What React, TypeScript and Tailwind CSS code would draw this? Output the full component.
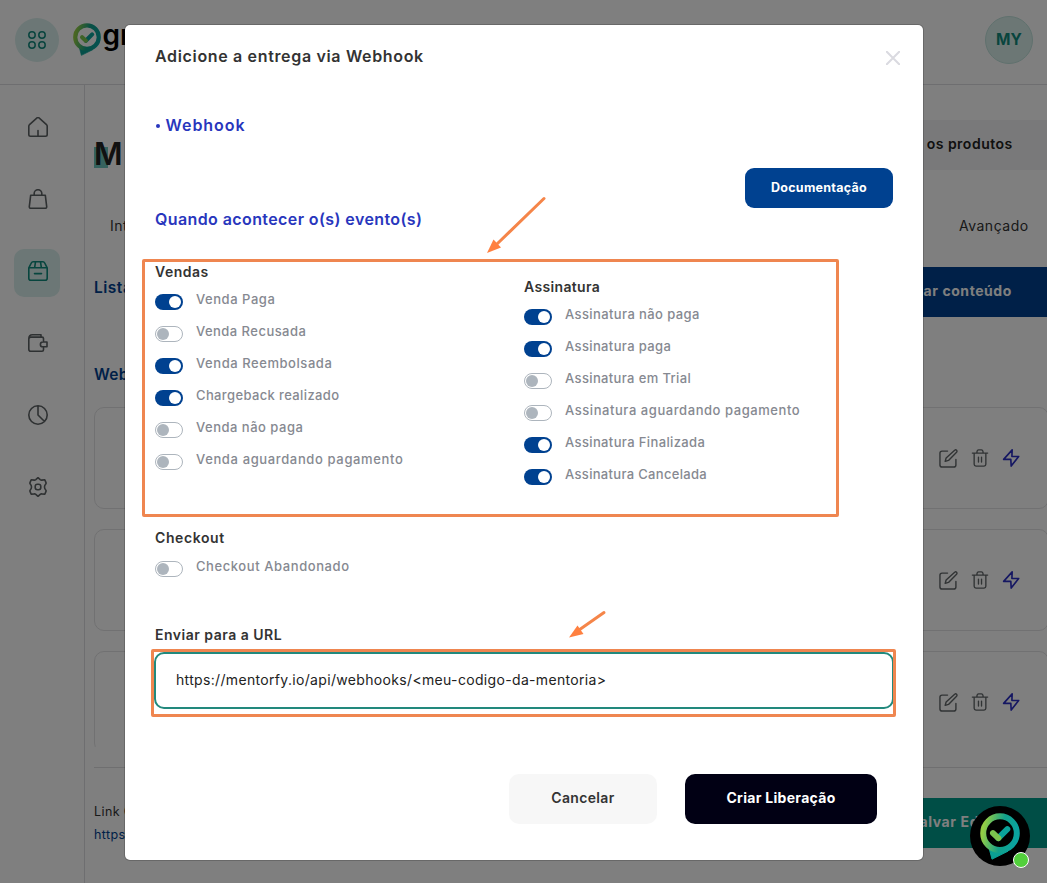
import type { ReactNode } from "react";

function LogoMark({ id, className }: { id: string; className: string }) {
  return (
    <svg viewBox="0 0 60 70" className={className} fill="none">
      <defs>
        <linearGradient id={id} x1="0" y1="0.4" x2="1" y2="0.6">
          <stop offset="0" stopColor="#93cd45" />
          <stop offset="0.55" stopColor="#12a08a" />
          <stop offset="1" stopColor="#0aa3a0" />
        </linearGradient>
      </defs>
      <path d="M13 50 L18 69 L42 57 Z" fill="#0b9f94" stroke="#0b9f94" strokeWidth="1.5" strokeLinejoin="round" />
      <circle cx="30" cy="30" r="25.2" stroke={`url(#${id})`} strokeWidth="9" />
      <path d="M27.500 37.500 41 24" stroke="#0aa39a" strokeWidth="9" strokeLinecap="round" />
      <path d="M19.500 30 27.500 37.500" stroke="#7cc64e" strokeWidth="9" strokeLinecap="round" />
    </svg>
  );
}

function Icon({ children, className }: { children: ReactNode; className: string }) {
  return (
    <svg viewBox="0 0 20 20" fill="none" stroke="currentColor" strokeLinecap="round" strokeLinejoin="round" className={className}>
      {children}
    </svg>
  );
}

const navIcons: { name: string; active?: boolean; art: ReactNode }[] = [
  { name: "home", art: <path d="M.8 9.300c0-.7.2-1.200.7-1.600L9 .9c.6-.5 1.400-.5 2 0l7.500 6.800c.5.4.7.9.7 1.600v8.200c0 1-.7 1.700-1.700 1.700H2.500c-1 0-1.700-.7-1.700-1.700zM10 19v-5.500" /> },
  { name: "bag", art: <path d="M2.700 6.200h14.600l1.400 11.400c.1 1-.4 1.700-1.400 1.700H2.700c-1 0-1.500-.7-1.400-1.700zM6.200 6.200V4.300a3.800 3.600 0 0 1 7.600 0v1.900" /> },
  { name: "box", active: true, art: <path d="M.8 6.800v10.400c0 1.200.8 2 2 2h14.400c1.200 0 2-.8 2-2V6.800M.8 6.800h18.400M.8 6.800 3.300 2C3.700 1.200 4.200.8 5 .8h10c.8 0 1.300.4 1.700 1.200l2.500 4.800M7.500.8 6.600 6.800M12.500.8l.9 6M6.500 12.600h7" /> },
  { name: "wallet", art: <path d="M15.500 8V5.600c0-.9-.6-1.500-1.500-1.500H3.200A2.200 2.200 0 0 0 .8 6.200v10c0 1.200.8 2 2 2H14c.9 0 1.500-.6 1.500-1.500v-2M.8 6C.8 3 2 1.800 4.500 1.800H13v2.300M19 9v4.800h-4.200a2.400 2.400 0 0 1 0-4.800z" /> },
  { name: "chart", art: <path d="M10 .8a9.200 9.200 0 1 0 0 18.400A9.200 9.200 0 0 0 10 .8V10l6.300 6.300" /> },
  {
    name: "settings",
    art: (
      <>
        <path d="M7.800 2.600 10 .6l2.200 2c.5.4 1 .6 1.600.5l3-.4 1.200 2.900c0 .2.300.9-.2 1.400-.6.700-1.300 1.200-1.300 3s.7 2.300 1.300 3c.5.500.2 1.200.2 1.400l-1.200 2.900-3-.4c-.6-.1-1.100.1-1.600.5l-2.200 2-2.200-2c-.5-.4-1-.6-1.600-.5l-3 .4L2 14.400c0-.2-.3-.9.2-1.400.6-.7 1.300-1.200 1.300-3S2.800 7.700 2.200 7C1.700 6.500 2 5.800 2 5.600l1.200-2.900 3 .4c.6.100 1.100-.1 1.600-.5z" />
        <rect x="7.200" y="7.200" width="5.600" height="5.600" rx="2.200" />
      </>
    ),
  },
];

function Toggle({ on }: { on: boolean }) {
  return on ? (
    <span className="flex h-4 w-7 items-center justify-end rounded-full bg-[#004190] pr-0.5">
      <span className="size-3 rounded-full bg-white" />
    </span>
  ) : (
    <span className="flex h-4 w-7 items-center rounded-full border border-[#adb5bd] bg-white pl-px">
      <span className="size-3 rounded-full bg-[#adb5bd]" />
    </span>
  );
}

type Opt = { label: string; on: boolean; track: string };

const vendas: Opt[] = [
  { label: "Venda Paga", on: true, track: "tracking-[0.54px]" },
  { label: "Venda Recusada", on: false, track: "tracking-[0.46px]" },
  { label: "Venda Reembolsada", on: true, track: "tracking-[0.56px]" },
  { label: "Chargeback realizado", on: true, track: "tracking-[0.37px]" },
  { label: "Venda não paga", on: false, track: "tracking-[0.5px]" },
  { label: "Venda aguardando pagamento", on: false, track: "tracking-[0.63px]" },
];

const assinatura: Opt[] = [
  { label: "Assinatura não paga", on: true, track: "tracking-[0.4px]" },
  { label: "Assinatura paga", on: true, track: "tracking-[0.37px]" },
  { label: "Assinatura em Trial", on: false, track: "tracking-[0.36px]" },
  { label: "Assinatura aguardando pagamento", on: false, track: "tracking-[0.56px]" },
  { label: "Assinatura Finalizada", on: true, track: "tracking-[0.37px]" },
  { label: "Assinatura Cancelada", on: true, track: "tracking-[0.32px]" },
];

function Option({ label, on, track }: Opt) {
  return (
    <label className="flex h-8 items-center gap-[13px]">
      <Toggle on={on} />
      <span className={`mb-1.5 text-[13px] leading-5 font-medium whitespace-nowrap text-[#868991] ${track}`}>{label}</span>
    </label>
  );
}

function RowActions() {
  return (
    <div className="flex items-center pl-[844px] text-[#63686a]">
      <Icon className="mr-[13px] size-[19px] stroke-[1.5]">
        <path d="M9 2.200H3.200C1.800 2.200 1 3 1 4.400v12.400C1 18.200 1.800 19 3.200 19h12.400c1.400 0 2.200-.8 2.200-2.200V11" />
        <path d="M16.500 1.300c.6-.6 1.400-.6 2 0s.6 1.400 0 2L10 12l-3.500 1 1-3.500z" />
      </Icon>
      <Icon className="mr-[13px] size-[18px] stroke-[1.5]">
        <path d="M1.500 4.500h17M3.500 4.500V17c0 1.300.8 2 2 2h9c1.200 0 2-.7 2-2V4.500M6.500 4.500c0-2.500 1-3.500 2-3.500h3c1 0 2 1 2 3.500M8.300 9v5.500M11.700 9v5.500" />
      </Icon>
      <Icon className="size-[18px] stroke-[1.8] text-[#2a2ec4]">
        <path d="M11.300 1 1.800 11.500H9.800L10.200 19 18.500 8.300H11z" />
      </Icon>
    </div>
  );
}

function Page() {
  return (
    <div className="flex h-[883px] w-[1100px] flex-col bg-white">
      <header className="flex h-[85px] shrink-0 items-center border-b border-[#dcdce0] pb-[5px] pl-[15px]">
        <div className="flex size-11 items-center justify-center rounded-full bg-[#d8efec]">
          <svg viewBox="0 0 18 18" fill="none" className="size-[18px] stroke-[#10897d] stroke-[1.5]">
            <circle cx="4" cy="4" r="3.200" />
            <circle cx="14" cy="4" r="3.200" />
            <circle cx="4" cy="14" r="3.200" />
            <circle cx="14" cy="14" r="3.200" />
          </svg>
        </div>
        <LogoMark id="brand" className="ml-[13.500px] h-[33px] w-7" />
        <span className="mb-[9px] ml-[2px] w-[81.500px] text-[28px] leading-8 font-semibold text-black">gr</span>
        <div className="ml-[801px] flex size-12 shrink-0 items-center justify-center rounded-full border border-[#c0e2dc] bg-[#d9eeea] text-[15.500px] font-bold text-[#108a7c]">
          MY
        </div>
      </header>
      <div className="flex min-h-0 grow">
        <nav className="flex w-[85px] shrink-0 flex-col items-start gap-6 border-r border-[#dcdce0] pt-5 pl-[14px]">
          {navIcons.map((n) => (
            <a
              key={n.name}
              aria-label={n.name}
              className={`flex h-12 w-[46px] items-center justify-center rounded-[10px] pb-1 pl-0.5 ${n.active ? "bg-[#d8efec] text-[#0f8a7c]" : "text-[#5d6264]"}`}
            >
              <Icon className="size-5 stroke-[1.6]">{n.art}</Icon>
            </a>
          ))}
        </nav>
        <main className="flex w-[1000px] shrink-0 flex-col pl-[9px]">
          <div className="mt-[35px] flex h-[50px] items-center">
            <h1 className="relative isolate mt-[18px] w-[720px] text-[31px] leading-[50px] font-semibold text-[#222]">
              <span className="absolute top-[18px] left-0 -z-10 h-[21px] w-[14px] bg-[#6cc5bc]" />
              M
            </h1>
            <div className="flex h-[50px] w-[280px] items-center bg-[#f3f3f4] pb-[3px] pl-[120px] text-[14px] font-semibold tracking-[0.5px] whitespace-nowrap text-[#222]">
              os produtos
            </div>
          </div>
          <div className="mt-[46px] flex h-5 items-center text-[14px] leading-5 tracking-[0.5px] text-[#333]">
            <span className="w-[865px] pl-4">Int</span>
            <span>Avançado</span>
          </div>
          <div className="mt-[31px] flex h-[50px] items-center">
            <h2 className="w-[760px] pb-[9px] text-[15.500px] font-semibold tracking-[0.5px] text-[#004190]">Lista</h2>
            <div className="flex h-[50px] w-[240px] items-center rounded-[4px] bg-[#004190] pb-[3px] pl-[77px] text-[14px] font-bold tracking-[0.56px] whitespace-nowrap text-white">
              ar conteúdo
            </div>
          </div>
          <h2 className="mt-12 h-5 text-[15.500px] leading-5 font-semibold tracking-[0.3px] text-[#004190]">Web</h2>
          <div className="mt-[22px] flex h-[340px] w-[955px] flex-col gap-5 overflow-hidden">
            {[0, 1, 2].map((k) => (
              <div key={k} className="flex h-[102px] shrink-0 items-center rounded-[10px] border border-[#e2e2e4]">
                <RowActions />
              </div>
            ))}
          </div>
          <div className="mt-5 h-px bg-[#dedee0]" />
          <div className="mt-[30px] flex h-[50px]">
            <div className="w-[760px] pt-0.5 text-[12.500px] tracking-[0.4px]">
              <p className="leading-[23px] text-[#333]">Link C</p>
              <p className="leading-[23px] text-[#004190]">https</p>
            </div>
            <div className="flex h-[50px] w-[240px] items-center bg-[#009c8c] pb-[3px] pl-[63px] text-[14px] font-bold tracking-[0.6px] text-white">Salvar Ed</div>
          </div>
        </main>
      </div>
    </div>
  );
}

function Modal() {
  return (
    <section className="flex h-[835px] w-[798px] flex-col rounded-[5px] bg-white px-[30px] pt-[21px] text-[#333] shadow-[0_0_0_1px_rgba(0,0,0,0.18)]">
      <div className="flex h-5 items-center justify-between">
        <h2 className="text-[16px] leading-5 font-semibold tracking-[0.66px]">Adicione a entrega via Webhook</h2>
        <svg viewBox="0 0 14 14" className="mt-[3px] mr-[-7px] size-[14px] stroke-[#dadae0] stroke-2" strokeLinecap="round">
          <path d="M.8.8 13.200 13.200M13.200.8.8 13.200" />
        </svg>
      </div>
      <h3 className="mt-[49px] flex h-5 items-center text-[16px] leading-5 font-semibold tracking-[0.95px] text-[#2836bd]">
        <span className="mt-0.5 mr-[6px] ml-px size-[3.500px] rounded-full bg-[#2836bd]" />
        Webhook
      </h3>
      <button className="mt-[33px] h-10 w-[148px] shrink-0 self-end rounded-[9px] bg-[#004190] text-[12.500px] font-bold tracking-[0.280px] text-white">Documentação</button>
      <h3 className="mt-px h-5 text-[16px] leading-5 font-semibold tracking-[0.4px] text-[#2836bd]">Quando acontecer o(s) evento(s)</h3>
      <div className="mt-[33px] grid h-[231px] grid-cols-2">
        <div>
          <h4 className="mb-1 text-[14px] leading-5 font-semibold tracking-[0.5px]">Vendas</h4>
          {vendas.map((o) => (
            <Option key={o.label} {...o} />
          ))}
        </div>
        <div className="pt-[15px]">
          <h4 className="mb-1 text-[14px] leading-5 font-semibold tracking-[0.35px]">Assinatura</h4>
          {assinatura.map((o) => (
            <Option key={o.label} {...o} />
          ))}
        </div>
      </div>
      <h4 className="mt-[35px] mb-[5px] text-[14px] leading-5 font-semibold tracking-[0.6px]">Checkout</h4>
      <Option label="Checkout Abandonado" on={false} track="tracking-[0.58px]" />
      <h4 className="mt-10 mb-[7px] text-[14px] leading-5 font-semibold tracking-[0.5px]">Enviar para a URL</h4>
      <div className="-mx-px flex h-[57px] shrink-0 items-center rounded-[10px] border-2 border-[#22897d] pb-0.5 pl-5 text-[14px] tracking-[0.33px] text-[#222]">
        https://mentorfy.io/api/webhooks/&lt;meu-codigo-da-mentoria&gt;
      </div>
      <div className="mt-[65px] mr-4 flex justify-end gap-7">
        <button className="h-[50px] w-[148px] rounded-[10px] bg-[#f7f7f7] pb-[3px] text-[14px] font-semibold tracking-[0.33px]">Cancelar</button>
        <button className="h-[50px] w-48 rounded-[10px] bg-[#010014] pb-[3px] text-[14px] font-bold tracking-[0.29px] text-white">Criar Liberação</button>
      </div>
    </section>
  );
}

export default function App() {
  return (
    <div className="relative h-[883px] w-[1047px] overflow-hidden font-['Inter',sans-serif]">
      <Page />
      <div className="absolute inset-0 bg-black/50 pt-[25px] pl-[125px]">
        <Modal />
      </div>
      <div className="absolute top-[259px] left-[142px] h-[258px] w-[697px] rounded-[2px] border-3 border-[#ef8650]" />
      <div className="absolute top-[649px] left-[151px] h-[68px] w-[745px] rounded-[2px] border-3 border-[#ef8650]" />
      <svg viewBox="0 0 150 80" className="absolute top-[185px] left-[475px] h-20 w-[150px]">
        <path d="M69 13.500 22 59" stroke="#f58549" strokeWidth="3" strokeLinecap="round" />
        <path d="M12 68 18.500 54.500 26 62.500Z" fill="#ff8040" />
      </svg>
      <svg viewBox="0 0 60 45" className="absolute top-[600px] left-[560px] h-[45px] w-[60px]">
        <path d="M44 12.500 19 30" stroke="#f58549" strokeWidth="3" strokeLinecap="round" />
        <path d="M9 37.500 17.500 25.500 23.500 34Z" fill="#ff8040" />
      </svg>
      <div className="absolute top-[806px] left-[970px] flex size-[60px] justify-center rounded-full bg-black pt-[7px]">
        <LogoMark id="widget" className="h-[47px] w-10" />
        <span className="absolute top-[46px] left-[43px] size-4 rounded-full border border-white bg-[#52cf3c]" />
      </div>
    </div>
  );
}
